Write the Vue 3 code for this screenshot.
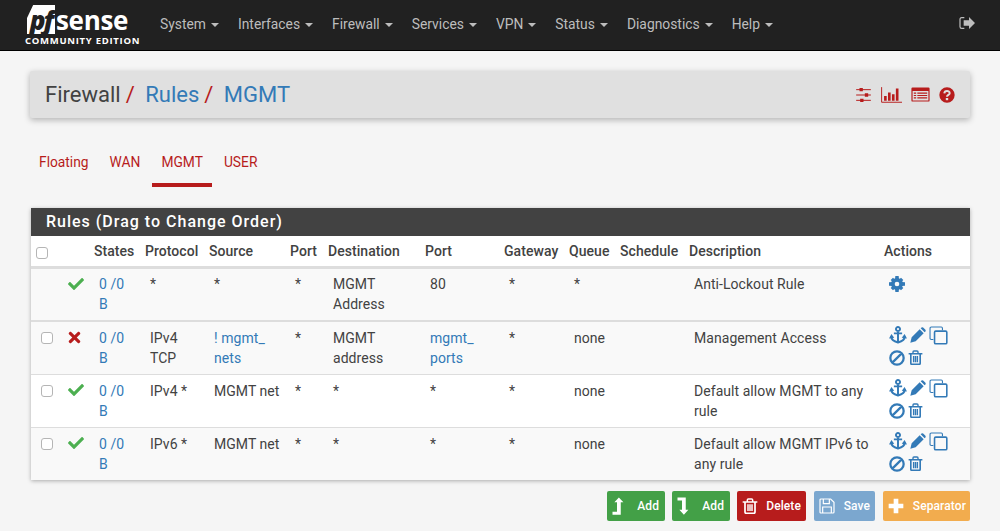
<script setup>
import { h } from 'vue'

const icons = {
  sliders: { vb: '0 0 24 24', s: [
    { d: 'M1 4H23M1 12H23M1 20H23', sw: 1.5 },
    { d: 'M6 1.500H11V6.500H6ZM14 9.500H19V14.500H14ZM7 17.500H12V22.500H7Z' } ] },
  chart: { vb: '0 0 24 18', s: [
    { d: 'M.7 0V17.300H24', sw: 1.100 },
    { d: 'M3.500 10H6.500V15.500H3.500ZM8 6H11V15.500H8ZM12.500 8H15.500V15.500H12.500ZM17 1.500H20V15.500H17Z' } ] },
  table: { vb: '0 0 24 19', s: [
    { d: 'M2 .5H22A1.500 1.500 0 0 1 23.500 2V17A1.500 1.500 0 0 1 22 18.500H2A1.500 1.500 0 0 1 .5 17V2A1.500 1.500 0 0 1 2 .5ZM2 5V17H22V5ZM3.500 7H6.500V8.500H3.500ZM8 7H20.500V8.500H8ZM3.500 10H6.500V11.500H3.500ZM8 10H20.500V11.500H8ZM3.500 13H6.500V14.500H3.500ZM8 13H20.500V14.500H8Z', rule: 'evenodd' } ] },
  help: { vb: '0 0 24 24', s: [
    { d: 'M12 .5A11.500 11.500 0 1 0 12 23.500A11.500 11.500 0 1 0 12 .5Z' },
    { d: 'M8 9.500C8.200 4.800 16 4.800 16 9.300C16 12 12 11.800 12 14.800', sw: 3, c: '#e0e0e0' },
    { d: 'M10.200 16.500H13.800V19.800H10.200Z', c: '#e0e0e0' } ] },
  signout: { vb: '0 0 24 20', s: [
    { d: 'M8 2H4Q1.500 2 1.500 4.500V15.500Q1.500 18 4 18H8', sw: 1.800 },
    { d: 'M15 1L24 10L15 19V14H7V6H15Z' } ] },
  check: { vb: '0 0 512 512', s: [
    { d: 'M173.898 439.404l-166.4-166.4c-9.997-9.997-9.997-26.206 0-36.204l36.203-36.204c9.997-9.998 26.207-9.998 36.204 0L192 312.69 432.095 72.596c9.997-9.997 26.207-9.997 36.204 0l36.203 36.204c9.997 9.997 9.997 26.206 0 36.204l-294.4 294.401c-9.998 9.997-26.207 9.997-36.204-.001z' } ] },
  times: { vb: '0 0 352 512', s: [
    { d: 'M242.72 256l100.07-100.07c12.28-12.28 12.28-32.19 0-44.48l-22.24-22.24c-12.28-12.28-32.19-12.28-44.48 0L176 189.28 75.93 89.21c-12.28-12.28-32.19-12.28-44.48 0L9.21 111.45c-12.28 12.28-12.28 32.19 0 44.48L109.28 256 9.21 356.07c-12.28 12.28-12.28 32.19 0 44.48l22.24 22.24c12.28 12.28 32.2 12.28 44.48 0L176 322.72l100.07 100.07c12.28 12.28 32.2 12.28 44.48 0l22.24-22.24c12.28-12.28 12.28-32.19 0-44.48L242.72 256z' } ] },
  cog: { vb: '0 0 24 24', s: [
    { d: 'M12 3A9 9 0 1 0 12 21A9 9 0 1 0 12 3ZM12 8.500A3.500 3.500 0 1 1 12 15.500A3.500 3.500 0 1 1 12 8.500Z', rule: 'evenodd' },
    { d: 'M9.500 0H14.500L15 5H9ZM9.500 24H14.500L15 19H9ZM0 9.500V14.500L5 15V9ZM24 9.500V14.500L19 15V9ZM2.500 6L6 2.500L10 6.500L6.500 10ZM21.500 18L18 21.500L14 17.500L17.500 14ZM18 2.500L21.500 6L17.500 10L14 6.500ZM6 21.500L2.500 18L6.500 14L10 17.500Z' } ] },
  anchor: { vb: '0 0 24 24', s: [
    { d: 'M12 1.300A2.700 2.700 0 1 0 12 6.700A2.700 2.700 0 1 0 12 1.300ZM12 6.700V22M6.500 9.800H17.500', sw: 2.600 },
    { d: 'M3 14C3 19 8 21 12 22C16 21 21 19 21 14', sw: 2.800 },
    { d: 'M0 16.500L3.200 10.500L7 15.500ZM24 16.500L20.800 10.500L17 15.500Z' } ] },
  pencil: { vb: '0 0 24 24', s: [
    { d: 'M.5 23.500L2.500 15.500L14.500 3.500L20.500 9.500L8.500 21.500ZM16 2L17.300 .8Q18.500 0 19.700 .8L23.200 4.300Q24 5.500 23.200 6.700L22 8Z' } ] },
  clone: { vb: '0 0 24 24', s: [
    { d: 'M5.500 17H3Q1.300 17 1.300 15.500V3Q1.300 1.300 3 1.300H15.500Q17 1.300 17 3V5.500', sw: 1.400 },
    { d: 'M8.500 6.500H21Q22.500 6.500 22.500 8V21Q22.500 22.500 21 22.500H8.500Q7 22.500 7 21V8Q7 6.500 8.500 6.500Z', sw: 2 } ] },
  ban: { vb: '0 0 24 24', s: [
    { d: 'M12 2A10 10 0 1 0 12 22A10 10 0 1 0 12 2ZM5 19L19 5', sw: 3.400 } ] },
  trash: { vb: '0 0 24 24', s: [
    { d: 'M4.500 6V21Q4.500 23 6.500 23H17.500Q19.500 23 19.500 21V6', sw: 2.600 },
    { d: 'M1 6H23M8 6V3Q8 1.500 9.500 1.500H14.500Q16 1.500 16 3V6M9 9.500V19.500M12 9.500V19.500M15 9.500V19.500', sw: 2.200 } ] },
  levelUp: { vb: '0 0 16 24', s: [
    { d: 'M0 19.500H6V7H2.500L8.500 .5L14.500 7H11V23.500H0Z' } ] },
  levelDown: { vb: '0 0 16 24', s: [
    { d: 'M0 4.500H6V17H2.500L8.500 23.500L14.500 17H11V.5H0Z' } ] },
  save: { vb: '0 0 24 24', s: [
    { d: 'M3 1.500H17.500L22.500 6.500V21Q22.500 22.500 21 22.500H3Q1.500 22.500 1.500 21V3Q1.500 1.500 3 1.500ZM6.500 2V8.500H15.500V2M5.500 22V13.500H18.500V22', sw: 1.800 } ] },
  plus: { vb: '0 0 24 24', s: [
    { d: 'M8.500 1H15.500V8.500H23V15.500H15.500V23H8.500V15.500H1V8.500H8.500Z' } ] }
}

const Icon = (props) => {
  const def = icons[props.name]
  return h('svg', { viewBox: def.vb, class: 'icon', 'aria-hidden': 'true' }, def.s.map((p) =>
    p.sw
      ? h('path', { d: p.d, fill: 'none', stroke: p.c || 'currentColor', 'stroke-width': p.sw })
      : h('path', { d: p.d, fill: p.c || 'currentColor', 'fill-rule': p.rule || 'nonzero' })
  ))
}
Icon.props = ['name']

const menu = ['System', 'Interfaces', 'Firewall', 'Services', 'VPN', 'Status', 'Diagnostics', 'Help']
const tabs = ['Floating', 'WAN', 'MGMT', 'USER']
const columns = ['States', 'Protocol', 'Source', 'Port', 'Destination', 'Port', 'Gateway', 'Queue', 'Schedule', 'Description', 'Actions']
const widths = [29, 34, 51, 64, 81, 38, 97, 79, 65, 51, 69, 195, 86]

const rows = [
  { lock: true, status: 'check', proto: ['*'], src: '*', port: '*', dest: ['MGMT', 'Address'], dport: '80', gw: '*', queue: '*', desc: 'Anti-Lockout Rule' },
  { status: 'times', proto: ['IPv4', 'TCP'], src: '! mgmt_ nets', srcLink: true, port: '*', dest: ['MGMT', 'address'], dport: 'mgmt_ ports', dportLink: true, gw: '*', queue: 'none', desc: 'Management Access' },
  { status: 'check', proto: ['IPv4 *'], src: 'MGMT net', port: '*', dest: ['*'], dport: '*', gw: '*', queue: 'none', desc: 'Default allow MGMT to any rule' },
  { status: 'check', proto: ['IPv6 *'], src: 'MGMT net', port: '*', dest: ['*'], dport: '*', gw: '*', queue: 'none', desc: 'Default allow MGMT IPv6 to any rule' }
]
</script>

<template>
  <div class="page">
    <nav class="nav">
      <div class="logo">
        <div class="logo-top">
          <span class="pf">pf</span><span class="sense">sense</span>
        </div>
        <div class="edition">COMMUNITY EDITION</div>
      </div>
      <ul class="menu">
        <li v-for="m in menu" :key="m">{{ m }}<i class="caret"></i></li>
      </ul>
      <Icon name="signout" class="logout" />
    </nav>

    <main class="main">
      <header class="crumb">
        <h1><span>Firewall</span><em>/</em><a>Rules</a><em>/</em><a>MGMT</a></h1>
        <div class="crumb-icons">
          <Icon name="sliders" class="ci-sliders" />
          <Icon name="chart" class="ci-chart" />
          <Icon name="table" class="ci-table" />
          <Icon name="help" class="ci-help" />
        </div>
      </header>

      <ul class="tabs">
        <li v-for="t in tabs" :key="t" :class="{ active: t === 'MGMT' }">{{ t }}</li>
      </ul>

      <section class="panel">
        <h2>Rules (Drag to Change Order)</h2>
        <table>
          <colgroup>
            <col v-for="(w, i) in widths" :key="i" :style="{ width: w + 'px' }" />
          </colgroup>
          <thead>
            <tr>
              <th class="chk-h"><span class="box"></span></th>
              <th></th>
              <th v-for="(c, i) in columns" :key="i">{{ c }}</th>
            </tr>
          </thead>
          <tbody>
            <tr v-for="(r, i) in rows" :key="i">
              <td class="chk"><span v-if="!r.lock" class="box"></span></td>
              <td class="st"><Icon :name="r.status" :class="r.status" /></td>
              <td><a>0 /0 B</a></td>
              <td><div v-for="p in r.proto" :key="p">{{ p }}</div></td>
              <td><a v-if="r.srcLink">{{ r.src }}</a><template v-else>{{ r.src }}</template></td>
              <td>{{ r.port }}</td>
              <td><div v-for="d in r.dest" :key="d">{{ d }}</div></td>
              <td><a v-if="r.dportLink">{{ r.dport }}</a><template v-else>{{ r.dport }}</template></td>
              <td>{{ r.gw }}</td>
              <td>{{ r.queue }}</td>
              <td></td>
              <td>{{ r.desc }}</td>
              <td class="actions">
                <template v-if="r.lock"><Icon name="cog" class="a-cog" /></template>
                <div v-else class="a-grid">
                  <Icon name="anchor" class="a-anchor" />
                  <Icon name="pencil" class="a-pencil" />
                  <Icon name="clone" class="a-clone" />
                  <Icon name="ban" class="a-ban" />
                  <Icon name="trash" class="a-trash" />
                </div>
              </td>
            </tr>
          </tbody>
        </table>
      </section>

      <div class="buttons">
        <button class="btn green"><Icon name="levelUp" />Add</button>
        <button class="btn green"><Icon name="levelDown" />Add</button>
        <button class="btn red"><Icon name="trash" />Delete</button>
        <button class="btn blue"><Icon name="save" />Save</button>
        <button class="btn orange"><Icon name="plus" />Separator</button>
      </div>
    </main>
  </div>
</template>

<style>
html, body { margin: 0; background: #f5f5f5; }
</style>

<style scoped>
.page {
  width: 1000px;
  height: 531px;
  overflow: hidden;
  background: #f5f5f5;
  font-family: Roboto, "Liberation Sans", sans-serif;
  font-size: 14px;
  line-height: 20px;
  letter-spacing: .05px;
  color: #424242;
}
a { color: #337ab7; }
.icon { display: block; flex: none; }

/* navbar */
.nav {
  height: 50px;
  background: #212121;
  border-bottom: 1px solid #000;
  display: flex;
  align-items: center;
  padding-left: 25px;
  color: #bdbdbd;
}
.logo { width: 117px; margin-right: 18px; color: #fff; padding-top: 1px; }
.logo-top { display: flex; align-items: center; height: 29px; margin-left: 2px; }
.pf {
  display: flex;
  align-items: center;
  justify-content: center;
  flex: none;
  width: 28px;
  height: 29px;
  background: #fff;
  color: #212121;
  font: italic 800 26px/24px "Open Sans", sans-serif;
  letter-spacing: -2px;
  clip-path: polygon(22% 0, 100% 0, 100% 100%, 0 100%, 0 45%);
}
.sense {
  font: 700 26px/26px "Open Sans", sans-serif;
  letter-spacing: -.3px;
  margin-left: 1px;
}
.edition {
  font: 700 9.500px/11px "Open Sans", sans-serif;
  letter-spacing: .72px;
  white-space: nowrap;
  margin-top: 1px;
}
.menu {
  list-style: none;
  margin: 0 0 2px;
  padding: 0;
  display: flex;
  gap: 19px;
  flex: 1;
  font-size: 13.850px;
  letter-spacing: 0;
}
.menu li { display: flex; align-items: center; white-space: nowrap; }
.caret {
  width: 0;
  height: 0;
  margin-left: 5px;
  margin-top: 2px;
  border-left: 4px solid transparent;
  border-right: 4px solid transparent;
  border-top: 4px solid #bdbdbd;
}
.logout { width: 16px; height: 14px; margin-right: 25px; margin-top: -5px; color: #bdbdbd; }

/* main */
.main { padding: 20px 30px 0; }
.crumb {
  height: 47px;
  background: #e0e0e0;
  border-radius: 2px;
  box-shadow: 0 2px 6px rgba(0, 0, 0, .28);
  display: flex;
  align-items: center;
  justify-content: space-between;
  padding: 0 15px;
}
h1 {
  margin: 0;
  font-size: 22px;
  font-weight: 400;
  line-height: 46px;
  letter-spacing: 0;
  color: #424242;
  display: flex;
}
h1 em { color: #b71c1c; font-style: normal; margin: 0 10.500px 0 5px; }
.crumb-icons { display: flex; align-items: center; gap: 9px; color: #b71c1c; }
.ci-sliders { width: 17px; height: 16px; }
.ci-chart { width: 21px; height: 16px; }
.ci-table { width: 19px; height: 15px; }
.ci-help { width: 16px; height: 16px; }

/* tabs */
.tabs {
  list-style: none;
  margin: 33px 0 0;
  padding: 0;
  display: flex;
  height: 36px;
  color: #b71c1c;
  font-size: 13.800px;
  letter-spacing: 0;
}
.tabs li { padding: 0 9px; margin-right: 3px; height: 36px; line-height: 22px; box-sizing: border-box; }
.tabs li.active { border-bottom: 4px solid #b71c1c; padding: 0 9.500px; margin: 0 2.500px 0 -.5px; }

/* panel */
.panel {
  margin: 21px 0 0 1px;
  background: #fff;
  box-shadow: 0 1px 4px rgba(0, 0, 0, .3);
}
h2 {
  margin: 0;
  height: 28px;
  background: #424242;
  color: #fff;
  font-size: 16px;
  font-weight: 500;
  line-height: 28px;
  letter-spacing: 1px;
  padding-left: 15px;
}
table { width: 939px; border-collapse: collapse; table-layout: fixed; }
th {
  height: 30px;
  padding: 0;
  text-align: left;
  font-weight: 500;
  white-space: nowrap;
  border-bottom: 3px solid #ddd;
  background: #fff;
}
td {
  height: 53px;
  box-sizing: border-box;
  padding: 6px 10px 5px 5px;
  vertical-align: top;
  border-bottom: 1px solid #ddd;
  background: #f9f9f9;
}
tbody tr:first-child td { border-bottom-width: 2px; padding-top: 5px; }
tbody tr:nth-child(2) td { height: 54px; }
tbody tr:nth-child(3) td { background: #fff; }
tbody tr:last-child td { border-bottom: 0; height: 52px; }
.box {
  display: block;
  box-sizing: border-box;
  width: 12px;
  height: 12px;
  background: #fff;
  border: 1px solid #b5b5b5;
  border-radius: 3px;
}
.chk-h .box { margin: 3px 0 0 5px; }
tbody tr td.chk { padding: 10px 0 0 10px; }
tbody tr td.st { padding: 7px 0 0 8px; }
.st svg { width: 16px; height: 16px; }
.st svg.check { color: #4caf50; }
.st svg.times { color: #b71c1c; width: 13px; height: 17px; }
tbody tr td.actions { padding: 4px 0 0 5px; color: #337ab7; }
.a-cog { width: 16px; height: 16px; margin-top: 3px; }
.a-grid { display: flex; flex-wrap: wrap; align-items: flex-start; align-content: flex-start; row-gap: 5px; width: 62px; }
.a-anchor { width: 18px; height: 18px; }
.a-pencil { width: 16px; height: 16px; margin-left: 3px; margin-top: 1px; }
.a-clone { width: 19px; height: 19px; margin-left: 3px; }
.a-ban { width: 16px; height: 16px; }
.a-trash { width: 15px; height: 15px; margin-left: 3px; }

/* buttons */
.buttons { display: flex; justify-content: flex-end; gap: 7px; margin-top: 11px; }
.btn {
  height: 30px;
  box-sizing: border-box;
  border: 0;
  border-radius: 2px;
  padding: 0 5px;
  display: flex;
  align-items: center;
  justify-content: space-between;
  color: #fff;
  font-family: Roboto, sans-serif;
  font-size: 12px;
  font-weight: 500;
  letter-spacing: .1px;
}
.btn svg { width: 16px; height: 16px; }
.green { background: #43a047; width: 58px; padding-right: 6px; }
.green svg { width: 13px; height: 18px; }
.red { background: #b71c1c; width: 69px; }
.blue { background: #7ba7cf; width: 61px; margin-left: 1px; }
.orange { background: #f2ac4e; width: 87px; margin-left: 1px; padding-right: 4px; }
</style>
